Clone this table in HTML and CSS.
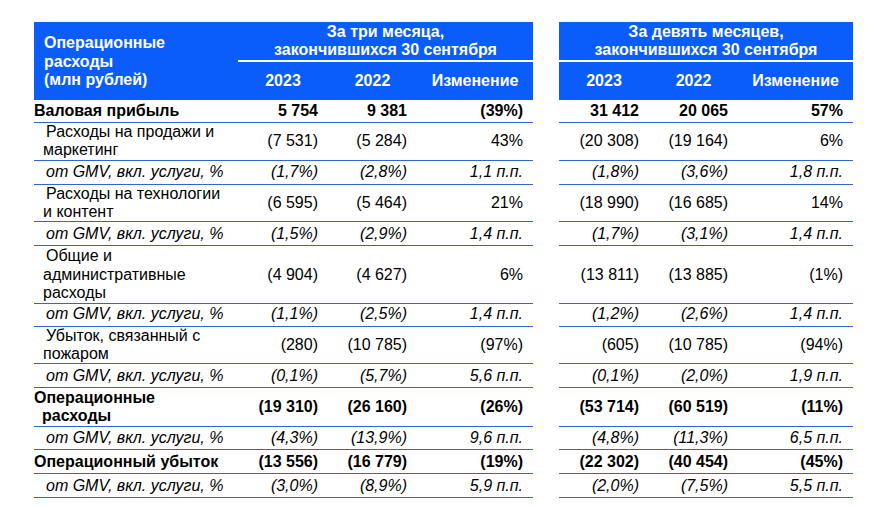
FILE: index.html
```html
<!DOCTYPE html>
<html lang="ru">
<head>
<meta charset="utf-8">
<title>Операционные расходы</title>
<link rel="stylesheet" href="styles.css">
</head>
<body>
<table class="tbl">
  <colgroup>
    <col class="c-label">
    <col class="c-a"><col class="c-b"><col class="c-c">
    <col class="c-gap">
    <col class="c-a"><col class="c-b"><col class="c-c2">
  </colgroup>
  <thead>
    <tr class="h1">
      <th class="lbl-h" rowspan="2">Операционные<br>расходы<br>(млн рублей)</th>
      <th class="grp" colspan="3">За три месяца,<br>закончившихся 30 сентября</th>
      <th class="gap" rowspan="2"></th>
      <th class="grp" colspan="3">За девять месяцев,<br>закончившихся 30 сентября</th>
    </tr>
    <tr class="h2">
      <th class="yr">2023</th><th class="yr">2022</th><th class="yr">Изменение</th>
      <th class="yr">2023</th><th class="yr">2022</th><th class="yr">Изменение</th>
    </tr>
  </thead>
  <tbody>
    <tr class="row b r23">
      <td class="lbl">Валовая прибыль</td>
      <td>5 754</td><td>9 381</td><td>(39%)</td><td class="gap"></td>
      <td>31 412</td><td>20 065</td><td>57%</td>
    </tr>
    <tr class="row">
      <td class="lbl">Расходы на продажи и<br>маркетинг</td>
      <td>(7 531)</td><td>(5 284)</td><td>43%</td><td class="gap"></td>
      <td>(20 308)</td><td>(19 164)</td><td>6%</td>
    </tr>
    <tr class="row i">
      <td class="lbl">от GMV, вкл. услуги, %</td>
      <td>(1,7%)</td><td>(2,8%)</td><td>1,1 п.п.</td><td class="gap"></td>
      <td>(1,8%)</td><td>(3,6%)</td><td>1,8 п.п.</td>
    </tr>
    <tr class="row">
      <td class="lbl">Расходы на технологии<br>и контент</td>
      <td>(6 595)</td><td>(5 464)</td><td>21%</td><td class="gap"></td>
      <td>(18 990)</td><td>(16 685)</td><td>14%</td>
    </tr>
    <tr class="row i">
      <td class="lbl">от GMV, вкл. услуги, %</td>
      <td>(1,5%)</td><td>(2,9%)</td><td>1,4 п.п.</td><td class="gap"></td>
      <td>(1,7%)</td><td>(3,1%)</td><td>1,4 п.п.</td>
    </tr>
    <tr class="row tall">
      <td class="lbl">Общие и<br>административные<br>расходы</td>
      <td>(4 904)</td><td>(4 627)</td><td>6%</td><td class="gap"></td>
      <td>(13 811)</td><td>(13 885)</td><td>(1%)</td>
    </tr>
    <tr class="row i r23">
      <td class="lbl">от GMV, вкл. услуги, %</td>
      <td>(1,1%)</td><td>(2,5%)</td><td>1,4 п.п.</td><td class="gap"></td>
      <td>(1,2%)</td><td>(2,6%)</td><td>1,4 п.п.</td>
    </tr>
    <tr class="row">
      <td class="lbl">Убыток, связанный с<br>пожаром</td>
      <td>(280)</td><td>(10 785)</td><td>(97%)</td><td class="gap"></td>
      <td>(605)</td><td>(10 785)</td><td>(94%)</td>
    </tr>
    <tr class="row i">
      <td class="lbl">от GMV, вкл. услуги, %</td>
      <td>(0,1%)</td><td>(5,7%)</td><td>5,6 п.п.</td><td class="gap"></td>
      <td>(0,1%)</td><td>(2,0%)</td><td>1,9 п.п.</td>
    </tr>
    <tr class="row b r39">
      <td class="lbl">Операционные<br><span class="ind">расходы</span></td>
      <td>(19 310)</td><td>(26 160)</td><td>(26%)</td><td class="gap"></td>
      <td>(53 714)</td><td>(60 519)</td><td>(11%)</td>
    </tr>
    <tr class="row i r23">
      <td class="lbl">от GMV, вкл. услуги, %</td>
      <td>(4,3%)</td><td>(13,9%)</td><td>9,6 п.п.</td><td class="gap"></td>
      <td>(4,8%)</td><td>(11,3%)</td><td>6,5 п.п.</td>
    </tr>
    <tr class="row b">
      <td class="lbl">Операционный убыток</td>
      <td>(13 556)</td><td>(16 779)</td><td>(19%)</td><td class="gap"></td>
      <td>(22 302)</td><td>(40 454)</td><td>(45%)</td>
    </tr>
    <tr class="row i">
      <td class="lbl">от GMV, вкл. услуги, %</td>
      <td>(3,0%)</td><td>(8,9%)</td><td>5,9 п.п.</td><td class="gap"></td>
      <td>(2,0%)</td><td>(7,5%)</td><td>5,5 п.п.</td>
    </tr>
  </tbody>
</table>
</body>
</html>
```
FILE: styles.css
```css
html, body {
  margin: 0;
  padding: 0;
  background: #ffffff;
}
body {
  padding: 22px 0 0 34px;
  font-family: "Liberation Sans", Arial, sans-serif;
  font-size: 16px;
  line-height: 18.4px;
  color: #000000;
}
.tbl {
  table-layout: fixed;
  width: 819px;
  border-collapse: separate;
  border-spacing: 0;
}
.c-label { width: 204px; }
.c-a { width: 90px; }
.c-b { width: 89px; }
.c-c { width: 116px; }
.c-c2 { width: 115px; }
.c-gap { width: 26px; }

th, td {
  padding: 0;
  vertical-align: middle;
}
thead th {
  background: #0a5cfb;
  color: #ffffff;
  font-weight: bold;
}
thead th.gap { background: transparent; }
.h1 { height: 38px; }
.h2 { height: 38px; }
.lbl-h {
  text-align: left;
  padding-left: 10px;
  padding-top: 2px;
}
.grp {
  text-align: center;
  border-bottom: 2px solid #ffffff;
  padding-top: 1px;
}
.yr {
  text-align: center;
  padding-top: 1px;
}

.row { height: 24px; }
.row.r23 { height: 23px; }
.row.r39 { height: 39px; }
.row td {
  text-align: right;
  padding-right: 10px;
  border-bottom: 1px solid #2f64d8;
}
.row.tall td { padding-top: 1px; }
.row td.gap {
  border-bottom: none;
  padding: 0;
}
.row td.lbl {
  text-align: left;
  padding-left: 9px;
  padding-right: 0;
  text-indent: 3px;
}
.row.b td { font-weight: bold; }
.row.b td.lbl {
  padding-left: 0;
  text-indent: 0;
}
.row.i td { font-style: italic; }
.row.i td.lbl {
  padding-left: 12px;
  text-indent: 0;
}
.ind { padding-left: 8px; }
```
